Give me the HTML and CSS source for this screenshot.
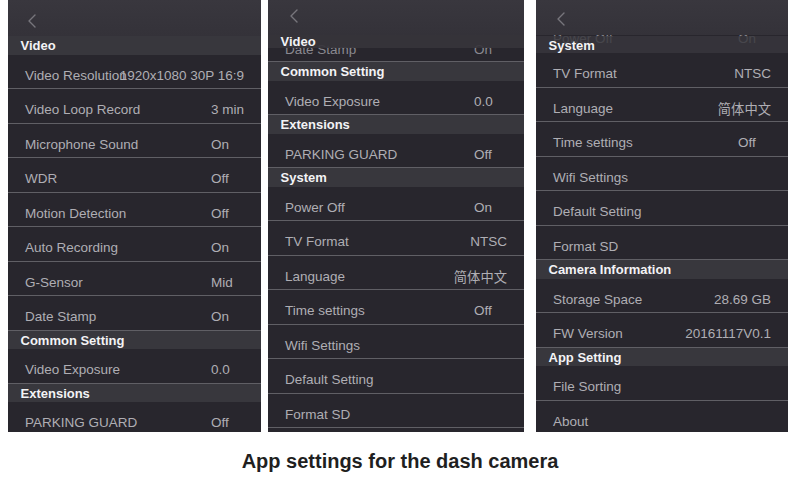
FILE: index.html
```html
<!DOCTYPE html>
<html lang="en">
<head>
<meta charset="utf-8">
<title>App settings for the dash camera</title>
<link rel="stylesheet" href="styles.css">
</head>
<body>
<div class="shots">
  <section class="phone phone-a">
    <div class="nav nav-a"><svg class="back" width="10" height="14" viewBox="0 0 10 14"><path d="M8 1 L2 7 L8 13"/></svg></div>
    <div class="hdr">Video</div>
    <div class="row"><span class="lbl">Video Resolution</span><span class="val">1920x1080 30P 16:9</span></div>
    <div class="row"><span class="lbl">Video Loop Record</span><span class="val">3 min</span></div>
    <div class="row"><span class="lbl">Microphone Sound</span><span class="val">On</span></div>
    <div class="row"><span class="lbl">WDR</span><span class="val">Off</span></div>
    <div class="row"><span class="lbl">Motion Detection</span><span class="val">Off</span></div>
    <div class="row"><span class="lbl">Auto Recording</span><span class="val">On</span></div>
    <div class="row"><span class="lbl">G-Sensor</span><span class="val">Mid</span></div>
    <div class="row"><span class="lbl">Date Stamp</span><span class="val">On</span></div>
    <div class="hdr">Common Setting</div>
    <div class="row"><span class="lbl">Video Exposure</span><span class="val">0.0</span></div>
    <div class="hdr">Extensions</div>
    <div class="row"><span class="lbl">PARKING GUARD</span><span class="val">Off</span></div>
  </section>

  <section class="phone phone-b">
    <div class="nav nav-b"><svg class="back" width="10" height="14" viewBox="0 0 10 14"><path d="M8 1 L2 7 L8 13"/></svg></div>
    <div class="peek">
      <div class="row ghost peek-date"><span class="lbl">Date Stamp</span><span class="val">On</span></div>
      <div class="hdr hdr-float hdr-video">Video</div>
    </div>
    <div class="hdr">Common Setting</div>
    <div class="row"><span class="lbl">Video Exposure</span><span class="val">0.0</span></div>
    <div class="hdr">Extensions</div>
    <div class="row"><span class="lbl">PARKING GUARD</span><span class="val">Off</span></div>
    <div class="hdr">System</div>
    <div class="row"><span class="lbl">Power Off</span><span class="val">On</span></div>
    <div class="row"><span class="lbl">TV Format</span><span class="val">NTSC</span></div>
    <div class="row"><span class="lbl">Language</span><span class="val cjk">简体中文</span></div>
    <div class="row"><span class="lbl">Time settings</span><span class="val">Off</span></div>
    <div class="row"><span class="lbl">Wifi Settings</span></div>
    <div class="row"><span class="lbl">Default Setting</span></div>
    <div class="row"><span class="lbl">Format SD</span></div>
    <div class="row"></div>
  </section>

  <section class="phone phone-c">
    <div class="nav nav-c"><svg class="back" width="10" height="14" viewBox="0 0 10 14"><path d="M8 1 L2 7 L8 13"/></svg></div>
    <div class="peek">
      <div class="row ghost peek-power"><span class="lbl">Power Off</span><span class="val">On</span></div>
      <div class="hdr hdr-float hdr-sys">System</div>
    </div>
    <div class="row"><span class="lbl">TV Format</span><span class="val">NTSC</span></div>
    <div class="row"><span class="lbl">Language</span><span class="val cjk">简体中文</span></div>
    <div class="row"><span class="lbl">Time settings</span><span class="val">Off</span></div>
    <div class="row"><span class="lbl">Wifi Settings</span></div>
    <div class="row"><span class="lbl">Default Setting</span></div>
    <div class="row"><span class="lbl">Format SD</span></div>
    <div class="hdr">Camera Information</div>
    <div class="row"><span class="lbl">Storage Space</span><span class="val">28.69 GB</span></div>
    <div class="row"><span class="lbl">FW Version</span><span class="val">20161117V0.1</span></div>
    <div class="hdr">App Setting</div>
    <div class="row"><span class="lbl">File Sorting</span></div>
    <div class="row"><span class="lbl">About</span></div>
  </section>
</div>
<p class="caption">App settings for the dash camera</p>
</body>
</html>
```
FILE: styles.css
```css
* {
  box-sizing: border-box;
  margin: 0;
  padding: 0;
}

html, body {
  background: #ffffff;
}

body {
  width: 800px;
  height: 486px;
  overflow: hidden;
  font-family: "Liberation Sans", Arial, "Noto Sans CJK SC", sans-serif;
}

.shots {
  display: flex;
  align-items: flex-start;
  padding-left: 8px;
  height: 432px;
}

.phone {
  flex: none;
  height: 432px;
  overflow: hidden;
  background: #28262d;
  display: flex;
  flex-direction: column;
}

.phone-a { width: 253px; }
.phone-b { width: 256px; margin-left: 7px; }
.phone-c { width: 252px; margin-left: 12px; }

.nav {
  flex: none;
  height: 35px;
  background: linear-gradient(#39373e, #343239);
  position: relative;
  z-index: 2;
  display: flex;
  align-items: flex-start;
}

.nav-a { height: 36px; padding: 14px 0 0 19px; }
.nav-b { padding: 9px 0 0 21px; }
.nav-c { padding: 12px 0 0 20px; }

.back path {
  fill: none;
  stroke: #77767c;
  stroke-width: 1.4;
  stroke-linecap: round;
  stroke-linejoin: round;
}

.hdr {
  flex: none;
  height: 18.5px;
  line-height: 19px;
  background: #38373d;
  color: #f3f3f5;
  font-weight: 700;
  font-size: 13px;
  padding-left: 12.5px;
  white-space: nowrap;
}

.row {
  flex: none;
  height: 34.5px;
  border-bottom: 1px solid #605f65;
  display: flex;
  align-items: center;
  padding: 8px 17px 0;
  color: #afaeb4;
  font-size: 13.5px;
  white-space: nowrap;
}

.lbl {
  flex: 1 1 auto;
  min-width: 0;
}

.val {
  flex: none;
  min-width: 33px;
}

.cjk {
  font-family: "Noto Sans CJK SC", sans-serif;
  font-size: 13.3px;
}

.peek {
  flex: none;
  position: relative;
}

.ghost {
  color: #8a8990;
}

.peek-date {
  height: 27px;
  align-items: flex-end;
  padding-top: 0;
  padding-bottom: 4px;
}

.peek-power {
  height: 18px;
  border-bottom: none;
  align-items: flex-start;
  padding-top: 0;
  overflow: hidden;
}

.peek-power span {
  line-height: 16px;
  margin-top: -4.5px;
}

.hdr-float {
  position: absolute;
  left: 0;
  right: 0;
}

.hdr-video {
  top: 0;
  height: 13px;
  line-height: 14px;
  background: rgba(54, 52, 59, 0.92);
}

.hdr-sys {
  top: 1px;
  height: 17px;
  line-height: 17px;
  padding-top: 1px;
  background: rgba(56, 55, 61, 0.82);
}

.caption {
  text-align: center;
  font-weight: 700;
  font-size: 20px;
  line-height: 24px;
  color: #1f1f1f;
  padding-top: 17px;
}
```
